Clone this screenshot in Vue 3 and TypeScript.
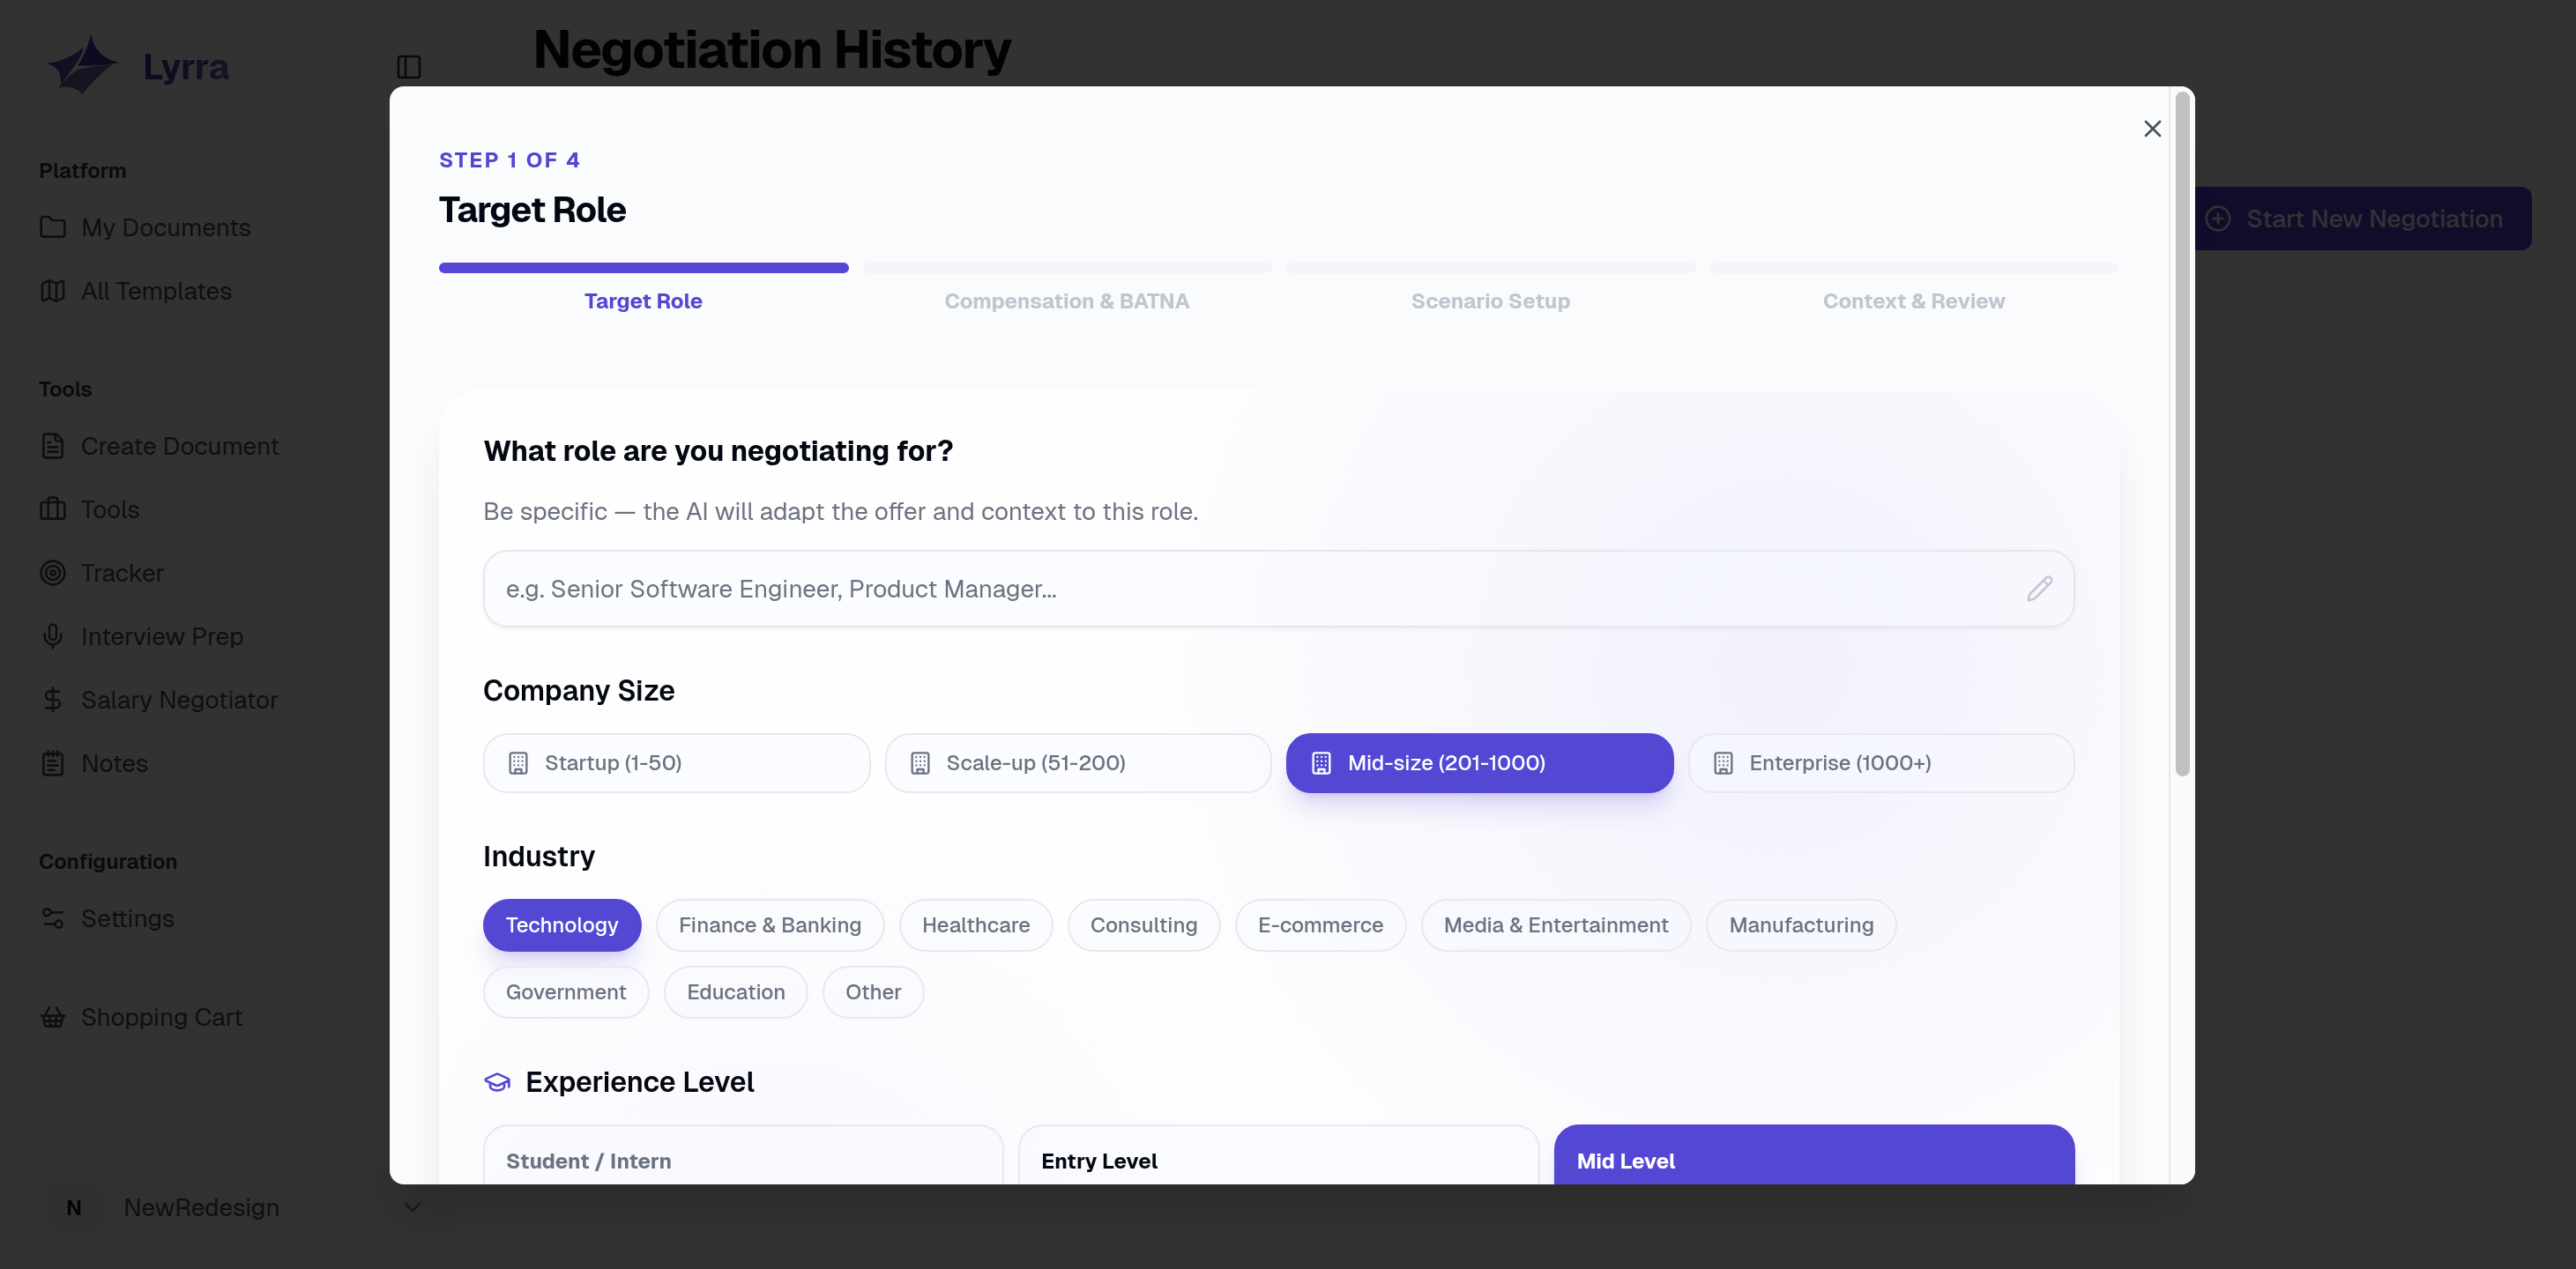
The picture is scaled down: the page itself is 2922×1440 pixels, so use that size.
<script setup lang="ts">
import { ref } from 'vue'

interface NavItem { label: string; icon: string }
interface NavGroup { title: string; items: NavItem[] }

const icons: Record<string, string> = {
  folder: '<path d="M20 20a2 2 0 0 0 2-2V8a2 2 0 0 0-2-2h-7.9a2 2 0 0 1-1.69-.9L9.6 3.9A2 2 0 0 0 7.93 3H4a2 2 0 0 0-2 2v13a2 2 0 0 0 2 2Z"/>',
  map: '<path d="M14.106 5.553a2 2 0 0 0 1.788 0l3.659-1.83A1 1 0 0 1 21 4.619v12.764a1 1 0 0 1-.553.894l-4.553 2.277a2 2 0 0 1-1.788 0l-4.212-2.106a2 2 0 0 0-1.788 0l-3.659 1.83A1 1 0 0 1 3 19.381V6.618a1 1 0 0 1 .553-.894l4.553-2.277a2 2 0 0 1 1.788 0z"/><path d="M15 5.764v15M9 3.236v15"/>',
  file: '<path d="M15 2H6a2 2 0 0 0-2 2v16a2 2 0 0 0 2 2h12a2 2 0 0 0 2-2V7Z"/><path d="M14 2v4a2 2 0 0 0 2 2h4M10 9H8M16 13H8M16 17H8"/>',
  briefcase: '<path d="M16 20V4a2 2 0 0 0-2-2h-4a2 2 0 0 0-2 2v16"/><rect width="20" height="14" x="2" y="6" rx="2"/>',
  target: '<circle cx="12" cy="12" r="10"/><circle cx="12" cy="12" r="6"/><circle cx="12" cy="12" r="2"/>',
  mic: '<path d="M12 2a3 3 0 0 0-3 3v7a3 3 0 0 0 6 0V5a3 3 0 0 0-3-3Z"/><path d="M19 10v2a7 7 0 0 1-14 0v-2M12 19v3"/>',
  dollar: '<path d="M12 2v20M17 5H9.5a3.5 3.5 0 0 0 0 7h5a3.5 3.5 0 0 1 0 7H6"/>',
  notes: '<path d="M8 2v4M12 2v4M16 2v4"/><rect width="16" height="18" x="4" y="4" rx="2"/><path d="M8 10h6M8 14h8M8 18h5"/>',
  sliders: '<path d="M20 7h-9M14 17H5"/><circle cx="17" cy="17" r="3"/><circle cx="7" cy="7" r="3"/>',
  basket: '<path d="m15 11-1 9M19 11l-4-7M2 11h20M3.5 11l1.6 7.4a2 2 0 0 0 2 1.6h9.8a2 2 0 0 0 2-1.6l1.7-7.4M4.5 15.5h15M5 11l4-7M9 11l1 9"/>',
  panel: '<rect width="18" height="18" x="3" y="3" rx="2"/><path d="M9 3v18"/>',
  chevron: '<path d="m6 9 6 6 6-6"/>',
  plus: '<circle cx="12" cy="12" r="10"/><path d="M8 12h8M12 8v8"/>',
  close: '<path d="M18 6 6 18M6 6l12 12"/>',
  pencil: '<path d="M21.174 6.812a1 1 0 0 0-3.986-3.987L3.842 16.174a2 2 0 0 0-.5.83l-1.321 4.352a.5.5 0 0 0 .623.622l4.353-1.32a2 2 0 0 0 .83-.497zM15 5l4 4"/>',
  building: '<rect width="16" height="20" x="4" y="2" rx="2"/><path d="M9 22v-4h6v4M8 6h.01M16 6h.01M12 6h.01M12 10h.01M12 14h.01M16 10h.01M16 14h.01M8 10h.01M8 14h.01"/>',
  cap: '<path d="M21.42 10.922a1 1 0 0 0-.019-1.838L12.83 5.18a2 2 0 0 0-1.66 0L2.6 9.08a1 1 0 0 0 0 1.832l8.57 3.908a2 2 0 0 0 1.66 0zM22 10v6M6 12.5V16a6 3 0 0 0 12 0v-3.5"/>',
}

const navGroups: NavGroup[] = [
  { title: 'Platform', items: [{ label: 'My Documents', icon: 'folder' }, { label: 'All Templates', icon: 'map' }] },
  {
    title: 'Tools',
    items: [
      { label: 'Create Document', icon: 'file' },
      { label: 'Tools', icon: 'briefcase' },
      { label: 'Tracker', icon: 'target' },
      { label: 'Interview Prep', icon: 'mic' },
      { label: 'Salary Negotiator', icon: 'dollar' },
      { label: 'Notes', icon: 'notes' },
    ],
  },
  { title: 'Configuration', items: [{ label: 'Settings', icon: 'sliders' }] },
]

const steps = ['Target Role', 'Compensation & BATNA', 'Scenario Setup', 'Context & Review']
const currentStep = ref(0)

const sizes = ['Startup (1-50)', 'Scale-up (51-200)', 'Mid-size (201-1000)', 'Enterprise (1000+)']
const size = ref('Mid-size (201-1000)')

const industries = ['Technology', 'Finance & Banking', 'Healthcare', 'Consulting', 'E-commerce', 'Media & Entertainment', 'Manufacturing', 'Government', 'Education', 'Other']
const industry = ref('Technology')

const levels = ['Student / Intern', 'Entry Level', 'Mid Level']
const level = ref('Mid Level')
const role = ref('')
</script>

<template>
  <div class="app">
    <aside class="sidebar">
      <div class="brand-row">
        <a href="#" class="brand">
          <svg class="logo" viewBox="164 110 252 212" aria-hidden="true">
            <defs>
              <linearGradient id="logoFill" x1="0" y1="0" x2="1" y2="1">
                <stop offset="0" stop-color="#4a32a8" />
                <stop offset="1" stop-color="#6f62a8" />
              </linearGradient>
            </defs>
            <path fill="#4c36a6" d="M318 114Q330 190 414 211Q340 224 273 220Q300 180 318 114Z" />
            <path fill="url(#logoFill)" d="M293 158Q235 205 167 213Q222 228 214 286Q250 240 273 205Q288 180 293 158Z" />
            <path fill="#7165a0" d="M392 216Q330 262 288 319Q262 284 206 296Q238 254 278 232Q320 222 392 216Z" />
          </svg>
          <span class="brand-name">Lyrra</span>
        </a>
        <button class="icon-button" type="button" aria-label="Toggle sidebar">
          <svg class="icon" viewBox="0 0 24 24" v-html="icons.panel" />
        </button>
      </div>
      <nav class="nav">
        <section v-for="group in navGroups" :key="group.title" class="nav-group">
          <h2 class="nav-title">{{ group.title }}</h2>
          <a v-for="item in group.items" :key="item.label" href="#" class="nav-link">
            <svg class="icon" viewBox="0 0 24 24" v-html="icons[item.icon]" />
            <span>{{ item.label }}</span>
          </a>
        </section>
        <a href="#" class="nav-link cart">
          <svg class="icon" viewBox="0 0 24 24" v-html="icons.basket" />
          <span>Shopping Cart</span>
        </a>
      </nav>
      <button class="account" type="button">
        <span class="avatar">N</span>
        <span class="account-name">NewRedesign</span>
        <svg class="icon muted" viewBox="0 0 24 24" v-html="icons.chevron" />
      </button>
    </aside>

    <main class="main">
      <h1 class="page-title">Negotiation History</h1>
      <button class="start" type="button">
        <svg class="icon" viewBox="0 0 24 24" v-html="icons.plus" />
        <span>Start New Negotiation</span>
      </button>
    </main>

    <div class="overlay">
      <div class="modal" role="dialog" aria-modal="true" aria-labelledby="dialog-title">
        <div class="modal-body">
          <header>
            <p class="eyebrow">STEP 1 OF 4</p>
            <h2 id="dialog-title" class="dialog-title">Target Role</h2>
            <ol class="steps">
              <li v-for="(step, i) in steps" :key="step" class="step" :class="{ active: i === currentStep }">{{ step }}</li>
            </ol>
          </header>

          <form class="card" @submit.prevent>
            <label for="role" class="question">What role are you negotiating for?</label>
            <p class="hint">Be specific — the AI will adapt the offer and context to this role.</p>
            <div class="field">
              <input id="role" v-model="role" type="text" placeholder="e.g. Senior Software Engineer, Product Manager..." />
              <svg class="icon" viewBox="0 0 24 24" v-html="icons.pencil" />
            </div>

            <h3 class="heading">Company Size</h3>
            <div class="sizes">
              <button
                v-for="s in sizes"
                :key="s"
                type="button"
                class="choice size"
                :class="{ selected: s === size }"
                :aria-pressed="s === size"
                @click="size = s"
              >
                <svg class="icon small" viewBox="0 0 24 24" v-html="icons.building" />
                <span>{{ s }}</span>
              </button>
            </div>

            <h3 class="heading">Industry</h3>
            <div class="chips">
              <button
                v-for="name in industries"
                :key="name"
                type="button"
                class="choice chip"
                :class="{ selected: name === industry }"
                :aria-pressed="name === industry"
                @click="industry = name"
              >{{ name }}</button>
            </div>

            <h3 class="heading">
              <svg class="icon accent" viewBox="0 0 24 24" v-html="icons.cap" />
              <span>Experience Level</span>
            </h3>
            <div class="levels">
              <button
                v-for="(l, i) in levels"
                :key="l"
                type="button"
                class="choice level"
                :class="{ selected: l === level, strong: i > 0 }"
                :aria-pressed="l === level"
                @click="level = l"
              >{{ l }}</button>
            </div>
          </form>
        </div>
        <div class="track"><div class="thumb"></div></div>
        <button class="close" type="button" aria-label="Close">
          <svg class="icon" viewBox="0 0 24 24" v-html="icons.close" />
        </button>
      </div>
    </div>
  </div>
</template>

<style>
body {
  background: #fafafa;
  overflow: hidden;
}
</style>

<style scoped>
.app {
  display: flex;
  height: 100vh;
  font-family: Geist, Inter, "Liberation Sans", sans-serif;
  font-size: 28px;
  color: #0a0a0a;
}
.app *, .app *::before { box-sizing: border-box; }
h1, h2, h3, p, ol { margin: 0; padding: 0; font-weight: inherit; }
button, input { font: inherit; color: inherit; margin: 0; }
button { border: 0; background: none; padding: 0; cursor: pointer; }
a { color: inherit; text-decoration: none; }
.icon {
  width: 32px;
  height: 32px;
  flex: none;
  fill: none;
  stroke: currentColor;
  stroke-width: 2;
  stroke-linecap: round;
  stroke-linejoin: round;
}
.icon.small { width: 28px; height: 28px; }
.icon.muted { opacity: 0.6; }

.sidebar {
  display: flex;
  flex-direction: column;
  width: 540px;
  flex: none;
  padding: 38px 24px 12px;
  color: #4a4a4a;
}
.brand-row {
  display: flex;
  align-items: center;
  justify-content: space-between;
  height: 76px;
  padding: 0 36px 0 28px;
}
.brand { display: flex; align-items: center; gap: 26px; }
.logo { width: 84px; height: 72px; margin-top: -6px; }
.brand-name {
  font-size: 40px;
  line-height: 48px;
  font-weight: 700;
  background: linear-gradient(90deg, #3b2aa0, #6f66a8);
  background-clip: text;
  color: transparent;
}
.icon-button { display: flex; color: #333; }
.nav { padding: 60px 20px 0; }
.nav-group { margin-bottom: 56px; }
.nav-group:nth-of-type(3) { margin-bottom: 40px; }
.nav-title {
  margin-bottom: 8px;
  font-size: 24px;
  line-height: 40px;
  font-weight: 600;
  color: #333;
}
.nav-link {
  display: flex;
  align-items: center;
  gap: 16px;
  height: 72px;
}
.account {
  display: flex;
  align-items: center;
  gap: 24px;
  height: 108px;
  margin-top: auto;
  padding: 0 32px 8px 28px;
  border-radius: 16px;
  background: #f3f3f3;
  text-align: left;
}
.avatar {
  display: grid;
  place-items: center;
  width: 64px;
  height: 52px;
  border-radius: 12px;
  background: #f0f0f0;
  font-size: 24px;
  font-weight: 600;
  color: #0a0a0a;
}
.account-name { flex: 1; }

.main {
  flex: 1;
  display: flex;
  flex-direction: column;
  padding: 20px 50px 0 64px;
}
.page-title {
  margin-bottom: 120px;
  font-size: 60px;
  line-height: 72px;
  font-weight: 700;
  letter-spacing: -0.025em;
}
.start {
  display: flex;
  align-items: center;
  gap: 16px;
  align-self: flex-end;
  height: 72px;
  padding: 0 32px;
  border-radius: 12px;
  background: #4f40d8;
  color: #fafafa;
  font-weight: 500;
}

.overlay {
  position: fixed;
  inset: 0;
  display: flex;
  align-items: center;
  justify-content: center;
  padding: 98px 0 96px;
  background: rgba(0, 0, 0, 0.8);
}
.modal {
  position: relative;
  display: flex;
  width: 2048px;
  max-width: 90vw;
  height: 100%;
  margin-left: 10px;
  border-radius: 16px;
  overflow: hidden;
  background: #fafbfd;
  box-shadow: 0 40px 50px -10px rgba(0, 0, 0, 0.15);
}
.modal-body {
  flex: 1;
  min-width: 0;
  padding: 66px 56px 64px;
  overflow: hidden;
}
.track {
  width: 30px;
  flex: none;
  padding: 6px;
  border-left: 2px solid #e8e8e8;
  background: #fafafa;
}
.thumb {
  width: 16px;
  height: 63%;
  border-radius: 8px;
  background: #c1c1c1;
}
.close {
  position: absolute;
  top: 32px;
  right: 32px;
  display: flex;
  color: #4a4e5a;
}
.eyebrow {
  margin-bottom: 10px;
  font-size: 24px;
  line-height: 36px;
  font-weight: 700;
  letter-spacing: 0.1em;
  color: #5347d0;
}
.dialog-title {
  margin-bottom: 32px;
  font-size: 40px;
  line-height: 56px;
  font-weight: 700;
  letter-spacing: -0.025em;
  color: #030712;
}
.steps {
  display: grid;
  grid-template-columns: repeat(4, 1fr);
  gap: 16px;
  list-style: none;
}
.step {
  font-size: 24px;
  line-height: 36px;
  font-weight: 700;
  text-align: center;
  color: #c0c5ce;
}
.step::before {
  content: "";
  display: block;
  height: 12px;
  margin-bottom: 14px;
  border-radius: 6px;
  background: #f3f5f8;
}
.step.active { color: #5347d0; }
.step.active::before { background: #5347d3; }

.card {
  margin-top: 82px;
  padding: 48px;
  border: 2px solid rgba(255, 255, 255, 0.4);
  border-radius: 48px;
  background:
    radial-gradient(circle at 80% 30%, rgba(80, 84, 236, 0.075), transparent 760px),
    radial-gradient(circle at 20% 98%, rgba(120, 90, 240, 0.05), transparent 560px),
    #fefefe;
  background-origin: border-box;
  box-shadow: 0 40px 50px -10px rgba(0, 0, 0, 0.09);
}
.question {
  display: block;
  margin-bottom: 28px;
  font-size: 32px;
  line-height: 40px;
  font-weight: 700;
  color: #030712;
}
.hint {
  margin-bottom: 24px;
  line-height: 40px;
  color: #6b7280;
}
.field { position: relative; }
.field input {
  display: block;
  width: 100%;
  height: 88px;
  padding: 0 80px 0 24px;
  border: 2px solid #e5e7eb;
  border-radius: 28px;
  background: rgba(248, 250, 255, 0.5);
  box-shadow: 0 2px 4px rgba(0, 0, 0, 0.05);
  outline: none;
}
.field input::placeholder { color: #6b7280; opacity: 1; }
.field .icon {
  position: absolute;
  top: 28px;
  right: 24px;
  color: #c6c7d2;
}
.heading {
  display: flex;
  align-items: center;
  gap: 16px;
  margin: 52px 0 28px;
  font-size: 32px;
  line-height: 40px;
  font-weight: 600;
  color: #030712;
}
.accent { color: #5347d0; }
.choice {
  border: 2px solid #e7e9ee;
  background: rgba(248, 249, 255, 0.5);
  font-size: 24px;
  line-height: 36px;
  font-weight: 500;
  color: #6b7280;
  text-align: left;
}
.choice.selected {
  border-color: #5347d3;
  background: #5347d3;
  color: #fff;
  box-shadow: 0 20px 30px -6px rgba(83, 71, 211, 0.2), 0 8px 12px -8px rgba(83, 71, 211, 0.2);
}
.sizes {
  display: grid;
  grid-template-columns: repeat(4, 1fr);
  gap: 16px;
}
.size {
  display: flex;
  align-items: center;
  gap: 16px;
  height: 68px;
  padding: 0 24px;
  border-radius: 28px;
}
.chips { display: flex; flex-wrap: wrap; gap: 16px; }
.chip {
  height: 60px;
  padding: 0 24px;
  border-radius: 30px;
}
.levels {
  display: grid;
  grid-template-columns: repeat(3, 1fr);
  gap: 16px;
}
.level {
  display: flex;
  align-items: flex-start;
  min-height: 160px;
  padding: 22px 24px;
  border-radius: 28px;
  font-weight: 700;
}
.level.strong { color: #030712; }
.level.selected { color: #fff; }
</style>
